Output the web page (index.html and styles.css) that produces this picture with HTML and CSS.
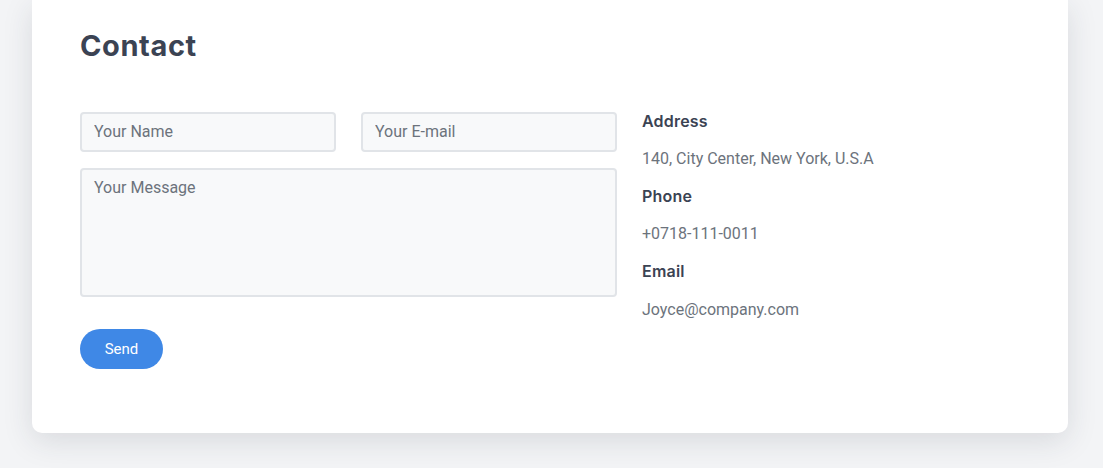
FILE: index.html
```html
<!DOCTYPE html>
<html lang="en">
<head>
<meta charset="utf-8">
<title>Contact</title>
<link rel="stylesheet" href="styles.css">
</head>
<body>
<section class="card">
  <h2 class="title">Contact</h2>
  <div class="layout">
    <form class="form">
      <div class="row">
        <input class="field" type="text" placeholder="Your Name">
        <input class="field" type="text" placeholder="Your E-mail">
      </div>
      <textarea class="field message" placeholder="Your Message"></textarea>
      <button class="send" type="button">Send</button>
    </form>
    <div class="info">
      <h4 class="info-label">Address</h4>
      <p class="info-text">140, City Center, New York, U.S.A</p>
      <h4 class="info-label">Phone</h4>
      <p class="info-text">+0718-111-0011</p>
      <h4 class="info-label">Email</h4>
      <p class="info-text">Joyce@company.com</p>
    </div>
  </div>
</section>
</body>
</html>
```
FILE: styles.css
```css
* { box-sizing: border-box; }
html, body { margin: 0; padding: 0; }
body {
  background: #f3f4f6;
  font-family: Roboto, "Liberation Sans", sans-serif;
  padding: 0 35px 36px 32px;
}
.card {
  background: #ffffff;
  border-radius: 0 0 10px 10px;
  box-shadow: 0 8px 30px rgba(40, 45, 60, 0.13);
  padding: 26px 48px 64px 48px;
}
.title {
  margin: 0;
  font-family: Inter, "Open Sans", sans-serif;
  font-weight: 700;
  font-size: 29px;
  line-height: 40px;
  color: #3b4353;
  letter-spacing: 0.6px;
}
.layout {
  display: grid;
  grid-template-columns: 537px 1fr;
  column-gap: 25px;
  margin-top: 46px;
}
.form {
  display: flex;
  flex-direction: column;
}
.row {
  display: grid;
  grid-template-columns: 256px 256px;
  column-gap: 25px;
}
.field {
  display: block;
  width: 100%;
  height: 40px;
  background: #f8f9fa;
  border: 2px solid #e1e4e8;
  border-radius: 4px;
  padding: 0 12px 1px;
  font-family: Roboto, "Liberation Sans", sans-serif;
  font-size: 16px;
  color: #495057;
  outline: none;
}
.field::placeholder { color: #6c737c; opacity: 1; }
.message {
  margin-top: 16px;
  height: 129px;
  padding: 7px 12px;
  resize: none;
  line-height: 22px;
}
.send {
  align-self: flex-start;
  margin-top: 32px;
  width: 83px;
  height: 40px;
  border: none;
  border-radius: 20px;
  background: #3f88e6;
  color: #ffffff;
  font-family: Roboto, "Liberation Sans", sans-serif;
  font-size: 15px;
  cursor: pointer;
}
.info { margin-top: -1px; }
.info-label {
  margin: 0;
  font-family: Inter, "Open Sans", sans-serif;
  font-weight: 600;
  font-size: 16px;
  line-height: 20px;
  color: #3b4353;
  letter-spacing: 0.2px;
}
.info-text {
  margin: 18px 0 17px;
  font-size: 16px;
  line-height: 20px;
  color: #6c737c;
}
.info-text:last-child { margin-top: 19px; }
```
